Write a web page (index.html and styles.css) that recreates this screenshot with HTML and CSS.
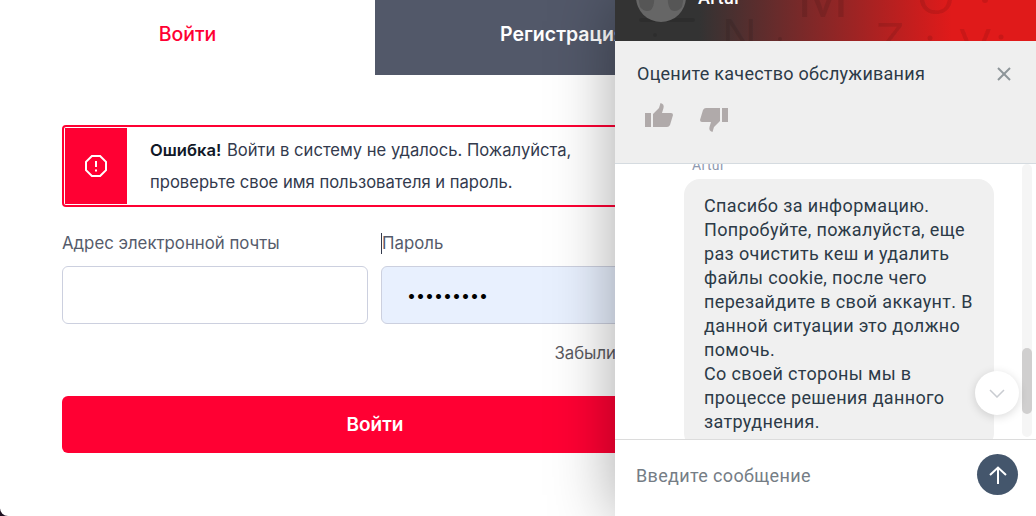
FILE: index.html
```html
<!DOCTYPE html>
<html lang="ru">
<head>
  <meta charset="UTF-8" />
  <title>Войти</title>
  <link rel="stylesheet" href="styles.css">
</head>
<body>

  <div class="card">
    <div class="tabs">
      <div class="tab active">Войти</div>
      <div class="tab">Регистрация</div>
    </div>

    <form class="login">
      <div class="alert">
        <div class="alert-icon">
          <svg width="24" height="24" viewBox="0 0 24 24" fill="none" stroke="#fff" stroke-width="2">
            <polygon points="7.9,2 16.1,2 22,7.9 22,16.1 16.1,22 7.9,22 2,16.1 2,7.9" />
            <line x1="12" y1="7" x2="12" y2="13" />
            <line x1="12" y1="15.5" x2="12" y2="17.5" />
          </svg>
        </div>
        <p class="alert-text"><b>Ошибка!</b> Войти в систему не удалось. Пожалуйста, проверьте свое имя пользователя и пароль.</p>
      </div>

      <div class="fields">
        <div class="field">
          <label>Адрес электронной почты</label>
          <input type="text" />
        </div>
        <div class="field">
          <label><span class="caret"></span>Пароль</label>
          <input class="filled" type="password" value="123456789" />
        </div>
      </div>

      <a class="forgot">Забыли пароль?</a>
      <button class="submit" type="button">Войти</button>
    </form>
  </div>

  <div class="chat">
    <div class="chat-head">
      <svg class="chat-letters" width="421" height="41">
        <g class="dots">
          <line x1="26" y1="20" x2="78" y2="20" />
          <circle cx="40" cy="35" r="2" />
          <circle cx="165" cy="39" r="2" />
          <circle cx="315" cy="38" r="2.5" />
          <circle cx="386" cy="37" r="2.5" />
          <circle cx="370" cy="0" r="3" />
        </g>
        <text x="107" y="52" class="letter">N</text>
        <text x="182" y="17" class="letter big">M</text>
        <text x="260" y="56" class="letter">Z</text>
        <text x="302" y="14" class="letter">O</text>
        <text x="344" y="62" class="letter">V</text>
      </svg>
      <div class="avatar">
        <svg width="50" height="50" viewBox="0 0 50 50">
          <circle cx="25" cy="25" r="25" fill="#666" />
          <path d="M2 24 L18 24 Q19 33 15 38 Q9 41 4 35 Z M48 24 L32 24 Q31 33 35 38 Q41 41 46 35 Z" fill="#565656" />
        </svg>
      </div>
      <div class="agent">Artur</div>
    </div>

    <div class="rate">
      <div class="rate-top">
        <span>Оцените качество обслуживания</span>
        <svg width="14" height="14" viewBox="0 0 14 14" stroke="#8d9599" stroke-width="2">
          <line x1="1" y1="1" x2="13" y2="13" />
          <line x1="13" y1="1" x2="1" y2="13" />
        </svg>
      </div>
      <div class="rate-btns">
        <svg width="28" height="26" viewBox="0 0 28 26" fill="#b0aaaa">
          <rect x="0" y="10" width="6" height="14" />
          <path d="M8 11 L14 5 L15.5 0 Q19.5 1 18.5 5 L17 10 L26 10 Q28 10 28 12 L25 22 Q24 24 22 24 L8 24 Z" />
        </svg>
        <svg class="down" width="28" height="26" viewBox="0 0 28 26" fill="#b0aaaa">
          <rect x="0" y="10" width="6" height="14" />
          <path d="M8 11 L14 5 L15.5 0 Q19.5 1 18.5 5 L17 10 L26 10 Q28 10 28 12 L25 22 Q24 24 22 24 L8 24 Z" />
        </svg>
      </div>
    </div>

    <div class="messages">
      <div class="msg-author">Artur</div>
      <div class="bubble">Спасибо за информацию.<br>Попробуйте, пожалуйста, еще раз очистить кеш и удалить файлы cookie, после чего перезайдите в свой аккаунт. В данной ситуации это должно помочь.<br>Со своей стороны мы в процессе решения данного затруднения.</div>
      <div class="scroll-track"><div class="scroll-thumb"></div></div>
      <div class="to-bottom">
        <svg width="16" height="9" viewBox="0 0 16 9" fill="none" stroke="#c9ccd1" stroke-width="1.5">
          <polyline points="1,1 8,8 15,1" />
        </svg>
      </div>
    </div>

    <div class="chat-foot">
      <span class="placeholder">Введите сообщение</span>
      <div class="send">
        <svg width="18" height="18" viewBox="0 0 18 18" fill="none" stroke="#fff" stroke-width="2">
          <line x1="9" y1="2" x2="9" y2="18" />
          <polyline points="1,9 9,1.5 17,9" />
        </svg>
      </div>
    </div>
  </div>

</body>
</html>
```

FILE: styles.css
```css
html, body {
  height: 100%;
}
body {
  margin: 0;
  position: relative;
  overflow: hidden;
  background: #1d1020;
  font-family: Inter, "Liberation Sans", sans-serif;
}
.card {
  width: 750px;
  height: 516px;
  background: #fff;
  border-bottom-left-radius: 8px;
  overflow: hidden;
}
.tabs {
  display: flex;
  height: 75px;
}
.tab {
  flex: 1;
  padding-top: 22px;
  box-sizing: border-box;
  background: #525869;
  color: #fff;
  font-size: 19.5px;
  line-height: 24px;
  font-weight: 600;
  text-align: center;
}
.tab.active {
  background: #fff;
  color: #ff0033;
  font-weight: 500;
}
.login {
  display: flex;
  flex-direction: column;
  padding: 50px 62px 0;
}
.alert {
  display: flex;
  height: 82px;
  box-sizing: border-box;
  border: 2px solid #ff0033;
  border-radius: 4px;
  padding: 1px;
  color: #333a4d;
}
.alert-icon {
  width: 62px;
  flex-shrink: 0;
  display: flex;
  justify-content: center;
  align-items: center;
  background: #ff0033;
}
.alert-text {
  margin: 0;
  padding: 6px 0 0 23px;
  font-size: 16.6px;
  line-height: 32px;
  width: 440px;
}
.alert-text b {
  color: #111827;
  font-weight: 600;
  margin-right: 1px;
}
.fields {
  display: grid;
  grid-template-columns: 306px 306px;
  gap: 13px;
  margin-top: 25px;
}
.field label {
  display: block;
  height: 34px;
  font-size: 16.8px;
  line-height: 22px;
  color: #555b6b;
}
.caret {
  display: inline-block;
  width: 1px;
  height: 21px;
  vertical-align: -5px;
  background: #333a4d;
}
.field input {
  display: block;
  width: 100%;
  height: 58px;
  box-sizing: border-box;
  padding: 0 25px;
  border: 1px solid #ccd0df;
  border-radius: 6px;
  background: #fff;
  font-size: 16px;
  font-family: inherit;
  outline: none;
}
.field input.filled {
  background: #e8f0fe;
}
.forgot {
  align-self: flex-end;
  margin-top: 18px;
  font-size: 16.8px;
  line-height: 22px;
  color: #5a5a5f;
}
.submit {
  height: 57px;
  margin-top: 32px;
  border: none;
  border-radius: 6px;
  background: #ff0033;
  color: #fff;
  font-family: inherit;
  font-size: 19px;
  font-weight: 600;
}

.chat {
  position: absolute;
  top: 0;
  left: 615px;
  right: 0;
  bottom: 0;
  display: flex;
  flex-direction: column;
  background: #fff;
  box-shadow: 0 0 60px rgba(0,0,0,0.35);
  font-family: Roboto, "Liberation Sans", sans-serif;
  letter-spacing: 0.35px;
}
.chat-head {
  position: relative;
  display: flex;
  align-items: flex-end;
  height: 41px;
  flex-shrink: 0;
  box-sizing: border-box;
  padding: 0 0 19px 21px;
  overflow: hidden;
  background: linear-gradient(90deg, #333 20%, #e01a1a 80%);
}
.chat-letters {
  position: absolute;
  top: 0;
  left: 0;
}
.dots {
  fill: rgba(0,0,0,0.1);
  stroke: rgba(0,0,0,0.1);
  stroke-width: 0;
}
.dots line {
  stroke-width: 4;
  stroke-linecap: round;
}
.letter {
  font-family: "Liberation Sans", sans-serif;
  font-size: 48px;
  fill: rgba(0,0,0,0.1);
}
.letter.big {
  font-size: 62px;
}
.avatar {
  position: relative;
  width: 50px;
  height: 50px;
  flex-shrink: 0;
  margin-right: 12px;
}
.agent {
  position: relative;
  margin-bottom: 14px;
  font-size: 18px;
  line-height: 20px;
  font-weight: 500;
  color: #fff;
}
.rate {
  position: relative;
  z-index: 1;
  height: 123px;
  flex-shrink: 0;
  box-sizing: border-box;
  padding: 21px 25px 0 22px;
  background: #efefef;
  border-bottom: 1px solid #d5dbe0;
}
.rate-top {
  display: flex;
  justify-content: space-between;
  align-items: center;
  font-size: 18px;
  line-height: 24px;
  letter-spacing: 0.25px;
  color: #2c3a47;
}
.rate-btns {
  display: flex;
  gap: 27px;
  margin: 17px 0 0 8px;
}
.rate-btns .down {
  transform: rotate(180deg);
  margin-top: 3px;
}
.messages {
  position: relative;
  flex: 1;
  overflow: hidden;
  padding-left: 69px;
}
.msg-author {
  margin: -7px 0 0 8px;
  font-size: 14px;
  line-height: 16px;
  color: #8f9ab0;
}
.bubble {
  width: 270px;
  margin-top: 6px;
  padding: 15px 20px;
  border-radius: 16px;
  background: #f0f0f0;
  font-size: 18px;
  line-height: 24px;
  color: #2c3a47;
}
.scroll-track {
  position: absolute;
  top: 0;
  bottom: 2px;
  right: 4px;
  width: 10px;
  border-radius: 5px;
  background: #f5f5f5;
}
.scroll-thumb {
  height: 66px;
  margin-top: 184px;
  border-radius: 5px;
  background: #d0cfcf;
}
.to-bottom {
  position: absolute;
  top: 207px;
  right: 17px;
  width: 44px;
  height: 44px;
  display: flex;
  justify-content: center;
  align-items: center;
  border-radius: 50%;
  background: #fff;
  box-shadow: 0 2px 10px rgba(0,0,0,0.15);
}
.chat-foot {
  display: flex;
  justify-content: space-between;
  align-items: center;
  height: 77px;
  flex-shrink: 0;
  box-sizing: border-box;
  padding: 0 18px 7px 21px;
  border-top: 1px solid #dcdcdc;
}
.placeholder {
  padding-top: 2px;
  font-size: 18px;
  color: #757d85;
}
.send {
  width: 41px;
  height: 41px;
  display: flex;
  justify-content: center;
  align-items: center;
  border-radius: 50%;
  background: #44566c;
}
```
